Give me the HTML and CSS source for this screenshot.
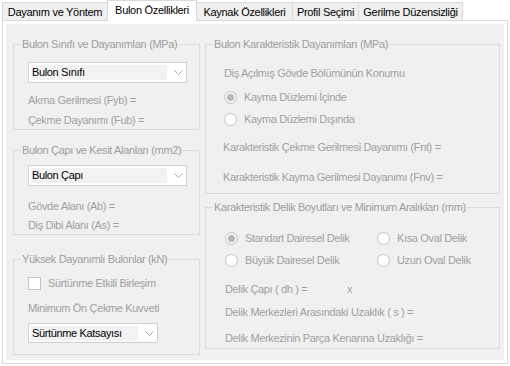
FILE: index.html
```html
<!DOCTYPE html>
<html lang="tr">
<head>
<meta charset="utf-8">
<title>Bulon Özellikleri</title>
<link rel="stylesheet" href="styles.css">
</head>
<body>
<div class="tabctl">
  <div class="strip">
    <div class="tab w1">Dayanım ve Yöntem</div>
    <div class="tab active w2">Bulon Özellikleri</div>
    <div class="tab w3">Kaynak Özellikleri</div>
    <div class="tab w4">Profil Seçimi</div>
    <div class="tab w5">Gerilme Düzensizliği</div>
  </div>
  <div class="panel">
    <div class="page">
      <div class="col left">
        <div class="group lg1">
          <div class="title">Bulon Sınıfı ve Dayanımları (MPa)</div>
          <div class="body pl14">
            <div class="combo wide mt11">
              <span class="field">Bulon Sınıfı</span>
              <svg class="chev" width="9" height="5" viewBox="0 0 9 5"><polyline points="0.5,0.5 4.5,4.5 8.5,0.5" fill="none" stroke="#a8a8a8" stroke-width="1"/></svg>
            </div>
            <div class="lbl mt10">Akma Gerilmesi (Fyb) =</div>
            <div class="lbl mt6">Çekme Dayanımı (Fub) =</div>
          </div>
        </div>
        <div class="group lg2">
          <div class="title">Bulon Çapı ve Kesit Alanları (mm2)</div>
          <div class="body pl14">
            <div class="combo wide mt8">
              <span class="field">Bulon Çapı</span>
              <svg class="chev" width="9" height="5" viewBox="0 0 9 5"><polyline points="0.5,0.5 4.5,4.5 8.5,0.5" fill="none" stroke="#a8a8a8" stroke-width="1"/></svg>
            </div>
            <div class="lbl mt13">Gövde Alanı (Ab) =</div>
            <div class="lbl mt5">Diş Dibi Alanı (As) =</div>
          </div>
        </div>
        <div class="group lg3">
          <div class="title">Yüksek Dayanımlı Bulonlar (kN)</div>
          <div class="body pl14">
            <div class="check mt10"><span class="box"></span><span class="lbl">Sürtünme Etkili Birleşim</span></div>
            <div class="lbl mt11">Minimum Ön Çekme Kuvveti</div>
            <div class="combo narrow mt8">
              <span class="field">Sürtünme Katsayısı</span>
              <svg class="chev" width="9" height="5" viewBox="0 0 9 5"><polyline points="0.5,0.5 4.5,4.5 8.5,0.5" fill="none" stroke="#a8a8a8" stroke-width="1"/></svg>
            </div>
          </div>
        </div>
      </div>
      <div class="col right">
        <div class="group rg1">
          <div class="title">Bulon Karakteristik Dayanımları (MPa)</div>
          <div class="body pl18">
            <div class="lbl mt15">Diş Açılmış Gövde Bölümünün Konumu</div>
            <div class="radio mt10"><span class="dot on"></span><span class="lbl">Kayma Düzlemi İçinde</span></div>
            <div class="radio mt8"><span class="dot"></span><span class="lbl">Kayma Düzlemi Dışında</span></div>
            <div class="lbl mt14 back1">Karakteristik Çekme Gerilmesi Dayanımı (Fnt) =</div>
            <div class="lbl mt16 back1">Karakteristik Kayma Gerilmesi Dayanımı (Fnv) =</div>
          </div>
        </div>
        <div class="group rg2">
          <div class="title">Karakteristik Delik Boyutları ve Minimum Aralıkları (mm)</div>
          <div class="body pl19">
            <div class="radios mt17">
              <div class="radio"><span class="dot on"></span><span class="lbl">Standart Dairesel Delik</span></div>
              <div class="radio"><span class="dot"></span><span class="lbl">Kısa Oval Delik</span></div>
              <div class="radio"><span class="dot"></span><span class="lbl">Büyük Dairesel Delik</span></div>
              <div class="radio"><span class="dot"></span><span class="lbl">Uzun Oval Delik</span></div>
            </div>
            <div class="lbl row mt15"><span class="cap">Delik Çapı ( dh ) =</span><span>x</span></div>
            <div class="lbl mt9">Delik Merkezleri Arasındaki Uzaklık ( s ) =</div>
            <div class="lbl mt12">Delik Merkezinin Parça Kenarına Uzaklığı =</div>
          </div>
        </div>
      </div>
    </div>
  </div>
</div>
</body>
</html>
```
FILE: styles.css
```css
* { box-sizing: border-box; }
html, body { margin: 0; padding: 0; }
body {
  background: #ffffff;
  font-family: "Liberation Sans", Arial, sans-serif;
  font-size: 11px;
  width: 510px;
  height: 366px;
  overflow: hidden;
}
.tabctl { padding-left: 2px; }
.strip {
  display: flex;
  align-items: flex-end;
  height: 20px;
}
.tab {
  height: 18px;
  border: 1px solid #d9d9d9;
  border-bottom: none;
  background: #f0f0f0;
  color: #000;
  text-align: center;
  line-height: 19px;
  letter-spacing: -0.3px;
  margin-left: -1px;
  white-space: nowrap;
}
.tab:first-child { margin-left: 0; }
.tab.active {
  height: 21px;
  margin-bottom: -1px;
  background: #ffffff;
  line-height: 19px;
  position: relative;
  z-index: 2;
}
.w1 { width: 106px; }
.w2 { width: 90px; }
.w3 { width: 97px; }
.w4 { width: 67px; }
.w5 { width: 105px; }

.panel {
  width: 506px;
  height: 344px;
  border: 1px solid #d9d9d9;
  background: #ffffff;
  padding: 3px;
}
.page {
  height: 100%;
  background: #f0f0f0;
  display: flex;
  gap: 5px;
  padding: 20px 4px 0 7px;
}
.col { display: flex; flex-direction: column; }
.left { width: 187px; }
.right { width: 295px; }

.group {
  border: 1px solid #dcdcdc;
  flex: none;
}
.lg1 { height: 86px; }
.lg2 { height: 85px; margin-top: 20px; }
.lg3 { height: 96px; margin-top: 24px; }
.rg1 { height: 150px; }
.rg2 { height: 142px; margin-top: 13px; }

.title {
  width: max-content;
  margin: -7px 0 0 7px;
  padding: 0 1px;
  background: #f0f0f0;
  line-height: 13px;
  color: #9d9d9d;
  letter-spacing: -0.35px;
  white-space: nowrap;
}
.pl14 { padding-left: 14px; }
.pl18 { padding-left: 18px; }
.pl19 { padding-left: 19px; }

.lbl {
  line-height: 14px;
  height: 14px;
  color: #a0a0a0;
  letter-spacing: -0.35px;
  white-space: nowrap;
}
.back1 { margin-left: -1px; }
.mt5 { margin-top: 5px; }
.mt6 { margin-top: 6px; }
.mt8 { margin-top: 8px; }
.mt9 { margin-top: 9px; }
.mt10 { margin-top: 10px; }
.mt11 { margin-top: 11px; }
.mt12 { margin-top: 12px; }
.mt13 { margin-top: 13px; }
.mt14 { margin-top: 14px; }
.mt15 { margin-top: 15px; }
.mt16 { margin-top: 16px; }
.mt17 { margin-top: 17px; }

.combo {
  display: flex;
  align-items: center;
  background: #ffffff;
  border: 1px solid #d0d0d0;
  padding: 0 0 0 2px;
}
.combo.wide { width: 159px; height: 21px; }
.combo.narrow { width: 130px; height: 20px; }
.field {
  background: #f2f2f2;
  color: #000;
  height: 15px;
  line-height: 15px;
  padding-left: 1px;
  letter-spacing: -0.35px;
  white-space: nowrap;
}
.wide .field { width: 136px; }
.narrow .field { width: 107px; }
.chev { margin-left: 7px; }

.check { display: flex; align-items: center; gap: 7px; height: 14px; }
.box {
  width: 13px;
  height: 13px;
  border: 1px solid #c4c4c4;
  background: #ffffff;
  flex: none;
}

.radio { display: flex; align-items: center; gap: 7px; height: 14px; }
.dot {
  width: 13px;
  height: 13px;
  border: 1px solid #c4c4c4;
  border-radius: 50%;
  background: #ffffff;
  flex: none;
  display: flex;
  align-items: center;
  justify-content: center;
}
.dot.on { background: #f4f4f4; }
.dot.on::after {
  content: "";
  width: 7px;
  height: 7px;
  border-radius: 50%;
  background: #b8b8b8;
}
.radios {
  display: grid;
  grid-template-columns: 152px auto;
  row-gap: 8px;
}
.row { display: flex; }
.cap { width: 122px; }
```
